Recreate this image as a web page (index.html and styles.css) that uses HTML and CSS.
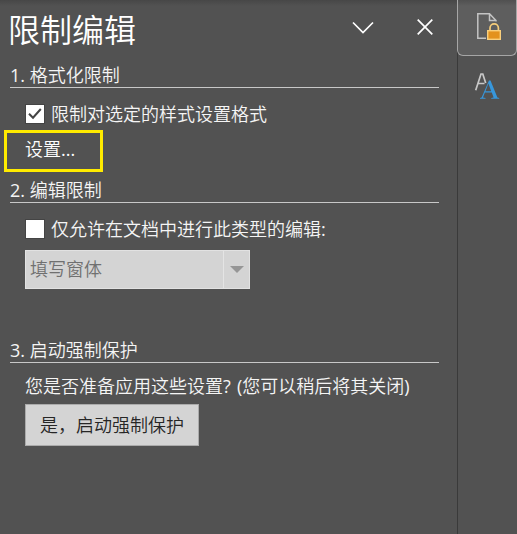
FILE: index.html
```
<!DOCTYPE html>
<html lang="zh-CN">
<head>
<meta charset="utf-8">
<title>限制编辑</title>
<link rel="stylesheet" href="styles.css">
</head>
<body>
<div class="app">
  <main class="pane">
    <header class="head">
      <h1>限制编辑</h1>
      <svg class="chevron" width="22" height="13" viewBox="0 0 22 13"><path d="M1 1.500 11 11.500 21 1.500"/></svg>
      <svg class="close" width="16" height="16" viewBox="0 0 16 16"><path d="M.7.7 15.3 15.3M15.3.7.7 15.3"/></svg>
    </header>
    <section class="group format">
      <h2><span class="latin">1. </span>格式化限制</h2>
      <div class="check">
        <span class="box"><svg width="18" height="18" viewBox="0 0 18 18"><path d="M3 8.700 7 12.700 14.800 4"/></svg></span>
        <span>限制对选定的样式设置格式</span>
      </div>
      <div class="settings">设置<span class="latin">...</span></div>
    </section>
    <section class="group editing">
      <h2><span class="latin">2. </span>编辑限制</h2>
      <div class="check">
        <span class="box"></span>
        <span>仅允许在文档中进行此类型的编辑<span class="latin">:</span></span>
      </div>
      <div class="select">
        <span class="value">填写窗体</span>
        <span class="arrow"><svg width="14" height="7" viewBox="0 0 14 7"><path d="M0 0H14L7 7Z"/></svg></span>
      </div>
    </section>
    <section class="group enforce">
      <h2><span class="latin">3. </span>启动强制保护</h2>
      <p>您是否准备应用这些设置<span class="latin">? (</span>您可以稍后将其关闭<span class="latin">)</span></p>
      <button>是，启动强制保护</button>
    </section>
  </main>
  <aside class="rail">
    <div class="tab active">
      <svg width="26" height="30" viewBox="0 0 26 30">
        <path class="page" d="M9 26.200H.8V1.700H12.500L19 8.500V9.500M12.500 1.700V8.500H19"/>
        <path class="shackle" d="M13 19V16a4.200 4.200 0 0 1 8.400 0V19"/>
        <rect class="lock" x="10.700" y="18.700" width="12.600" height="8.600"/>
      </svg>
    </div>
    <div class="tab">
      <svg width="26" height="30" viewBox="0 0 26 30">
        <path class="small-a" d="M1.700 18.300 7 2H8.800L11.700 11M4.200 11.500H10.500"/>
        <path class="big-a" transform="translate(0 1.500)" d="M15 7H16.500L23.400 24 25.200 24.500V25.300H17.200V24.500L19.600 24 17.800 19.100H10.900L9 24 11.500 24.500V25.300H6V24.500L7.600 24ZM14.400 10 11.500 17.700H17.200Z"/>
      </svg>
    </div>
  </aside>
</div>
</body>
</html>
```
FILE: styles.css
```
* { box-sizing: border-box; }
body {
  margin: 0;
  background: #525252;
  color: #f5f5f5;
  font: 350 18px/24px "Open Sans", "Noto Sans CJK SC", sans-serif;
}
svg { display: block; fill: none; }
.latin { font-weight: 400; }
.app {
  display: flex;
  height: 534px;
  overflow: hidden;
  background: linear-gradient(#474747, #525252 6px);
}
.pane { width: 457px; }
.head {
  display: flex;
  height: 64px;
  padding-left: 8px;
}
h1 {
  width: 344px;
  margin: 9px 0 0;
  font-size: 32px;
  font-weight: 350;
  line-height: 42px;
  color: #fff;
}
.chevron { margin-top: 21px; }
.close { margin: 19px 0 0 43px; }
.chevron path, .close path { stroke: #fff; stroke-width: 1.7; }
.group { padding-left: 25px; }
h2 {
  width: 429px;
  height: 24px;
  margin: 0 0 0 -15px;
  border-bottom: 1px solid #c8c8c8;
  font-size: 18px;
  font-weight: 350;
  line-height: 22px;
}
.format { height: 115px; }
.editing { height: 160px; }
.check {
  display: flex;
  align-items: center;
  gap: 6px;
  height: 20px;
  margin-top: 16px;
  white-space: nowrap;
}
.box {
  width: 20px;
  height: 20px;
  border: 1px solid #444;
  background: #fff;
}
.box path { stroke: #444; stroke-width: 2; }
.settings {
  width: 99px;
  height: 42px;
  margin: 6px 0 0 -21px;
  padding-left: 18px;
  border: 3px solid #ffeb00;
  line-height: 33px;
  color: #fff;
}
.select {
  display: flex;
  width: 225px;
  height: 39px;
  margin-top: 11px;
  border: 1px solid #e2e2e2;
  background: #d4d4d4;
  color: #707070;
  line-height: 37px;
}
.value { flex: 1; padding-left: 4px; }
.arrow {
  display: grid;
  place-items: center;
  width: 26px;
  border-left: 1px solid #e4e4e4;
}
.arrow path { fill: #969696; }
p {
  margin: 11px 0 6px;
  white-space: nowrap;
  word-spacing: 1.5px;
}
button {
  width: 174px;
  height: 42px;
  padding: 0;
  border: 1px solid #ababab;
  background: #d4d4d4;
  color: #262626;
  font: inherit;
}
.rail {
  width: 60px;
  border-left: 1px solid #3a3a3a;
}
.tab { padding: 16px 0 0 16px; }
.active {
  width: 60px;
  height: 56px;
  margin-left: -1px;
  padding: 12px 0 0 19px;
  border: 1px solid #a6a6a6;
  border-top: 0;
  border-radius: 0 0 6px 6px;
  background: linear-gradient(#505050, #5e5e5e 6px);
}
.page { stroke: #c4c4c4; stroke-width: 1.5; }
.shackle { stroke: #f5cc79; stroke-width: 1.7; }
.lock { fill: #e3921e; stroke: #f9cf7c; stroke-width: 1.4; }
.small-a { stroke: #c8c8c8; stroke-width: 1.7; }
.big-a { fill: #3797dc; fill-rule: evenodd; }
```
